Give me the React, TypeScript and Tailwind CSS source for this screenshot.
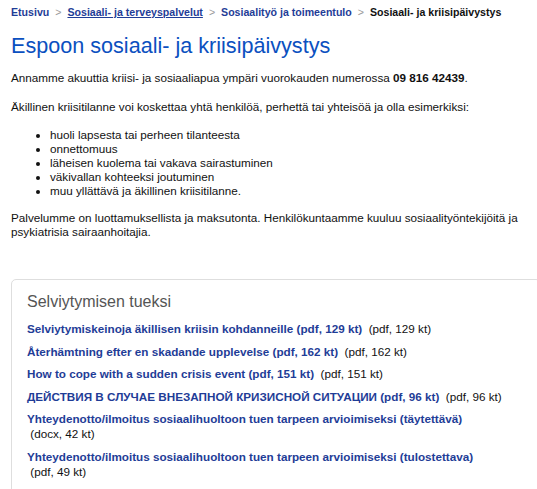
import React from "react";

const font = { fontFamily: '"Liberation Sans", Arial, sans-serif' };

function Sep() {
  return <span className="mx-[6px] text-[#9a9a9a] font-normal">&gt;</span>;
}

const links: { t: string; m: string }[] = [
  { t: "Selviytymiskeinoja äkillisen kriisin kohdanneille (pdf, 129 kt)", m: "(pdf, 129 kt)" },
  { t: "Återhämtning efter en skadande upplevelse (pdf, 162 kt)", m: "(pdf, 162 kt)" },
  { t: "How to cope with a sudden crisis event (pdf, 151 kt)", m: "(pdf, 151 kt)" },
  { t: "ДЕЙСТВИЯ В СЛУЧАЕ ВНЕЗАПНОЙ КРИЗИСНОЙ СИТУАЦИИ (pdf, 96 kt)", m: "(pdf, 96 kt)" },
  { t: "Yhteydenotto/ilmoitus sosiaalihuoltoon tuen tarpeen arvioimiseksi (täytettävä)", m: "(docx, 42 kt)" },
  { t: "Yhteydenotto/ilmoitus sosiaalihuoltoon tuen tarpeen arvioimiseksi (tulostettava)", m: "(pdf, 49 kt)" },
];

export default function App() {
  return (
    <div className="w-[537px] h-[489px] overflow-hidden bg-white text-[#111]" style={font}>
      <div className="w-[530px] ml-[11px] pt-[5px]">
        <nav className="text-[10.6px] font-bold leading-[14px] text-[#1f3d97]">
          <a>Etusivu</a>
          <Sep />
          <a className="underline">Sosiaali- ja terveyspalvelut</a>
          <Sep />
          <a>Sosiaalityö ja toimeentulo</a>
          <Sep />
          <span className="text-[#111]">Sosiaali- ja kriisipäivystys</span>
        </nav>
        <h1 className="mt-[14px] text-[21.6px] leading-[25px] text-[#0b50c0] font-normal">
          Espoon sosiaali- ja kriisipäivystys
        </h1>
        <div className="text-[11.7px] leading-[14px]">
          <p className="mt-[13px]">
            Annamme akuuttia kriisi- ja sosiaaliapua ympäri vuorokauden numerossa <b>09 816 42439</b>.
          </p>
          <p className="mt-[15px]">
            Äkillinen kriisitilanne voi koskettaa yhtä henkilöä, perhettä tai yhteisöä ja olla esimerkiksi:
          </p>
          <ul className="mt-[14px] list-disc pl-[39px]">
            <li>huoli lapsesta tai perheen tilanteesta</li>
            <li>onnettomuus</li>
            <li>läheisen kuolema tai vakava sairastuminen</li>
            <li>väkivallan kohteeksi joutuminen</li>
            <li>muu yllättävä ja äkillinen kriisitilanne.</li>
          </ul>
          <p className="mt-[13px]">
            Palvelumme on luottamuksellista ja maksutonta. Henkilökuntaamme kuuluu sosiaalityöntekijöitä ja psykiatrisia sairaanhoitajia.
          </p>
        </div>
        <section className="mt-[40px] border border-[#dedede] rounded-[5px] pl-[15px] pr-[15px] pt-[12px] pb-[14px]">
          <h2 className="text-[16px] leading-[20px] text-[#555]">Selviytymisen tueksi</h2>
          <ul className="mt-[9px] text-[11.7px] leading-[15px]">
            {links.map((l, i) => (
              <li key={i} className="mb-[7.5px]">
                <a className="font-bold text-[#1f3d97]">{l.t}</a>{" "}
                <span className="whitespace-nowrap">{"\u00a0"}{l.m}</span>
              </li>
            ))}
          </ul>
        </section>
      </div>
    </div>
  );
}
